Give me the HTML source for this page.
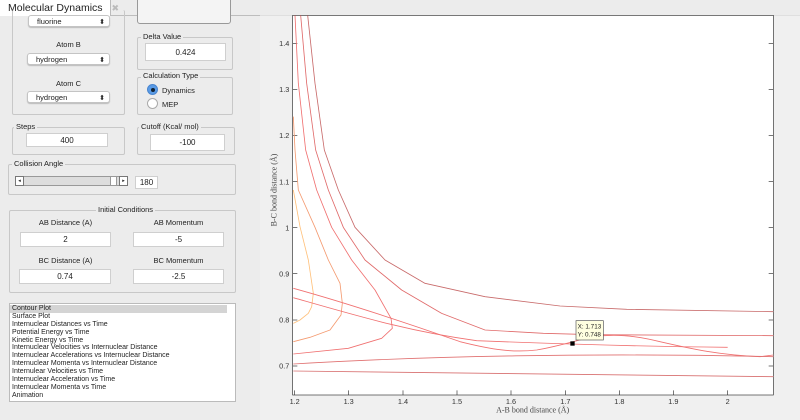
<!DOCTYPE html>
<html><head><meta charset="utf-8"><style>
body{margin:0;width:800px;height:420px;background:#ececec;font-family:"Liberation Sans",sans-serif;position:relative;overflow:hidden;font-size:7.5px;color:#222}
.a{position:absolute;box-sizing:border-box}
.g{border:1px solid #c8c8c8;border-radius:2px}
.lbl{position:absolute;background:#ececec;padding:0 2px;font-size:7.5px;line-height:9px}
.in{background:#fff;border:1px solid #cfcfcf;text-align:center;font-size:8px}
.sel{background:#fff;border:1px solid #c4c4c4;border-radius:3px;font-size:7.5px;padding-left:8px;box-shadow:0 1px 1px #bbb}
.sel:after{content:"⬍";position:absolute;right:4px;top:1px;font-size:7px}
.c{text-align:center;font-size:7.5px}
.lb div{height:7.9px;line-height:7.9px;white-space:nowrap;padding-left:2px}
</style></head><body>
<div class="a" style="left:0;top:15px;width:800px;height:1px;background:#bdbdbd"></div>
<div class="a" style="left:0;top:0;width:111px;height:16px;background:#fff;border-right:1px solid #bbb;font-size:10.5px;padding:2px 0 0 8px;white-space:nowrap">Molecular Dynamics <span style="color:#bbb;font-size:9px;margin-left:6px">✖</span></div>

<div class="a g" style="left:12px;top:10px;width:113px;height:105px;border-top:none"></div>
<div class="a sel" style="left:28px;top:15px;width:82px;height:12px;line-height:11px">fluorine</div>
<div class="a c" style="left:12px;top:40px;width:113px">Atom B</div>
<div class="a sel" style="left:27px;top:53px;width:83px;height:12px;line-height:11px">hydrogen</div>
<div class="a c" style="left:12px;top:79px;width:113px">Atom C</div>
<div class="a sel" style="left:27px;top:91px;width:83px;height:12px;line-height:11px">hydrogen</div>

<div class="a" style="left:137px;top:-3px;width:94px;height:27px;border:1px solid #999;border-radius:3px;background:#f4f4f4"></div>
<div class="a g" style="left:137px;top:37px;width:96px;height:33px"></div>
<div class="lbl" style="left:141px;top:32px">Delta Value</div>
<div class="a in" style="left:145px;top:43px;width:81px;height:18px;line-height:17px">0.424</div>
<div class="a g" style="left:137px;top:77px;width:96px;height:38px"></div>
<div class="lbl" style="left:141px;top:71px">Calculation Type</div>
<div class="a" style="left:147px;top:84px;width:11px;height:11px;border-radius:50%;background:#5a9be6;border:1px solid #4a86cf"><div class="a" style="left:3px;top:3px;width:4px;height:4px;border-radius:50%;background:#123"></div></div>
<div class="a" style="left:162px;top:86px">Dynamics</div>
<div class="a" style="left:147px;top:98px;width:11px;height:11px;border-radius:50%;background:#fff;border:1px solid #aaa"></div>
<div class="a" style="left:162px;top:100px">MEP</div>

<div class="a g" style="left:12px;top:127px;width:113px;height:28px"></div>
<div class="lbl" style="left:14px;top:122px">Steps</div>
<div class="a in" style="left:26px;top:133px;width:82px;height:14px;line-height:13px">400</div>
<div class="a g" style="left:137px;top:127px;width:98px;height:28px"></div>
<div class="lbl" style="left:139px;top:122px">Cutoff (Kcal/ mol)</div>
<div class="a in" style="left:150px;top:134px;width:75px;height:17px;line-height:16px">-100</div>

<div class="a g" style="left:8px;top:164px;width:228px;height:31px"></div>
<div class="lbl" style="left:12px;top:159px">Collision Angle</div>
<div class="a" style="left:15px;top:176px;width:113px;height:10px;background:#ddd;border:1px solid #999"></div>
<div class="a" style="left:15px;top:176px;width:9px;height:10px;background:#fff;border:1px solid #777;font-size:5px;text-align:center;line-height:8px">◂</div>
<div class="a" style="left:110px;top:176px;width:7px;height:10px;background:#fff;border:1px solid #999"></div>
<div class="a" style="left:119px;top:176px;width:9px;height:10px;background:#fff;border:1px solid #777;font-size:5px;text-align:center;line-height:8px">▸</div>
<div class="a in" style="left:135px;top:176px;width:23px;height:13px;line-height:12px">180</div>

<div class="a g" style="left:9px;top:210px;width:227px;height:83px"></div>
<div class="lbl" style="left:96px;top:205px">Initial Conditions</div>
<div class="a c" style="left:20px;top:218px;width:91px">AB Distance (A)</div>
<div class="a c" style="left:133px;top:218px;width:91px">AB Momentum</div>
<div class="a in" style="left:20px;top:232px;width:91px;height:15px;line-height:14px">2</div>
<div class="a in" style="left:133px;top:232px;width:91px;height:15px;line-height:14px">-5</div>
<div class="a c" style="left:20px;top:256px;width:91px">BC Distance (A)</div>
<div class="a c" style="left:133px;top:256px;width:91px">BC Momentum</div>
<div class="a in" style="left:19px;top:269px;width:92px;height:15px;line-height:14px">0.74</div>
<div class="a in" style="left:133px;top:269px;width:91px;height:15px;line-height:14px">-2.5</div>

<div class="a lb" style="left:9px;top:303px;width:227px;height:99px;background:#fff;border:1px solid #bbb;padding-top:1px;font-size:7px;overflow:hidden">
<div style="background:#d4d4d4;width:215px">Contour Plot</div>
<div>Surface Plot</div><div>Internuclear Distances vs Time</div><div>Potential Energy vs Time</div><div>Kinetic Energy vs Time</div><div>Internuclear Velocities vs Internuclear Distance</div><div>Internuclear Accelerations vs Internuclear Distance</div><div>Internuclear Momenta vs Internuclear Distance</div><div>Internulear Velocities vs Time</div><div>Internuclear Acceleration vs Time</div><div>Internuclear Momenta vs Time</div><div>Animation</div>
</div>

<svg class="a" style="left:260px;top:0" width="540" height="420" viewBox="0 0 1620 1260">
<rect x="0" y="46" width="1620" height="1214" fill="#f0f0f0"/>
<rect x="98" y="46" width="1442" height="1139" fill="#fff" stroke="#333" stroke-width="2"/>
<g stroke="#333" stroke-width="2">
<line x1="98" y1="130" x2="112" y2="130"/><line x1="98" y1="268" x2="112" y2="268"/><line x1="98" y1="406" x2="112" y2="406"/><line x1="98" y1="545" x2="112" y2="545"/><line x1="98" y1="683" x2="112" y2="683"/><line x1="98" y1="821" x2="112" y2="821"/><line x1="98" y1="960" x2="112" y2="960"/><line x1="98" y1="1098" x2="112" y2="1098"/>
<line x1="1526" y1="130" x2="1540" y2="130"/><line x1="1526" y1="268" x2="1540" y2="268"/><line x1="1526" y1="406" x2="1540" y2="406"/><line x1="1526" y1="545" x2="1540" y2="545"/><line x1="1526" y1="683" x2="1540" y2="683"/><line x1="1526" y1="821" x2="1540" y2="821"/><line x1="1526" y1="960" x2="1540" y2="960"/><line x1="1526" y1="1098" x2="1540" y2="1098"/>
<line x1="104" y1="1185" x2="104" y2="1171"/><line x1="266" y1="1185" x2="266" y2="1171"/><line x1="429" y1="1185" x2="429" y2="1171"/><line x1="591" y1="1185" x2="591" y2="1171"/><line x1="753" y1="1185" x2="753" y2="1171"/><line x1="916" y1="1185" x2="916" y2="1171"/><line x1="1078" y1="1185" x2="1078" y2="1171"/><line x1="1240" y1="1185" x2="1240" y2="1171"/><line x1="1403" y1="1185" x2="1403" y2="1171"/>
</g>
<g font-family="Liberation Sans" font-size="22" fill="#333" text-anchor="end">
<text x="88" y="138">1.4</text><text x="88" y="276">1.3</text><text x="88" y="414">1.2</text><text x="88" y="553">1.1</text><text x="88" y="691">1</text><text x="88" y="829">0.9</text><text x="88" y="968">0.8</text><text x="88" y="1106">0.7</text>
</g>
<g font-family="Liberation Sans" font-size="22" fill="#333" text-anchor="middle">
<text x="104" y="1212">1.2</text><text x="266" y="1212">1.3</text><text x="429" y="1212">1.4</text><text x="591" y="1212">1.5</text><text x="753" y="1212">1.6</text><text x="916" y="1212">1.7</text><text x="1078" y="1212">1.8</text><text x="1240" y="1212">1.9</text><text x="1403" y="1212">2</text>
</g>
<text x="818" y="1238" font-family="Liberation Serif" font-size="24" fill="#444" text-anchor="middle">A-B bond distance (Å)</text>
<text transform="translate(50,570) rotate(-90)" font-family="Liberation Serif" font-size="24" fill="#444" text-anchor="middle">B-C bond distance (Å)</text>
<g fill="none" stroke-width="2.5" stroke-linejoin="round">
<polyline stroke="#c86a6a" points="143,46 165,250 193,450 235,570 285,682 375,780 495,850 675,890 900,918 1100,928 1540,935"/>
<polyline stroke="#e06a6a" points="122,46 140,250 167,450 205,570 250,682 315,780 425,870 545,940 675,990 850,1000 1000,1004 1540,1007"/>
<polyline stroke="#f07070" points="105,46 115,250 137,450 170,570 215,682 275,780 345,870 393,955 397,985 365,1015 265,1045 100,1062"/>
<polyline stroke="#f49a70" points="100,350 105,450 115,570 165,682 205,780 240,850 247,910 243,945 210,990 150,1012 100,1025"/>
<polyline stroke="#ffc07a" points="100,570 120,680 145,780 160,880 155,920 145,940 120,960 100,970"/>
<path stroke="#f07070" d="M100,865 C300,920 500,990 600,1025 C700,1050 760,1058 830,1050 C900,1038 960,1018 1000,1010 C1060,1002 1120,1005 1200,1025 C1300,1048 1380,1065 1500,1070 L1540,1065"/>
<path stroke="#f07070" d="M100,893 C300,950 450,995 650,1022 C900,1032 1200,1040 1403,1042"/>
<path stroke="#e07070" d="M100,1092 C500,1068 1000,1058 1540,1070"/>
<path stroke="#d87070" d="M100,1113 L1540,1130"/>
</g>
<rect x="931" y="1024" width="13" height="13" fill="#000"/>
<rect x="948" y="962" width="82" height="58" fill="#ffffe0" stroke="#555" stroke-width="2"/>
<text x="953" y="986" font-family="Liberation Sans" font-size="19" fill="#222">X: 1.713</text>
<text x="953" y="1010" font-family="Liberation Sans" font-size="19" fill="#222">Y: 0.748</text>
</svg>
</body></html>
